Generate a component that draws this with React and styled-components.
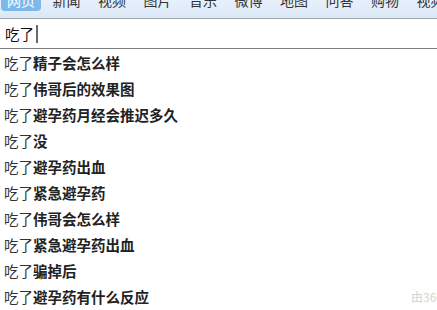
import React from "react";
import styled, { createGlobalStyle } from "styled-components";

const Global = createGlobalStyle`
  html, body { margin: 0; padding: 0; background: #fff; }
  body { font-family: "Noto Sans CJK SC", "Noto Sans", sans-serif; }
`;

const Page = styled.div`
  position: relative;
  width: 437px;
  height: 310px;
  overflow: hidden;
  background: #fff;
`;

const TabBar = styled.div`
  height: 19px;
  box-sizing: border-box;
  border-bottom: 1px solid #a2a9b1;
  background: linear-gradient(#e6f1fc, #dbe8f6);
  overflow: hidden;
`;

const Tabs = styled.div`
  display: flex;
  gap: 5.5px;
  margin-top: -8px;
  padding-left: 1px;
  white-space: nowrap;
`;

const Tab = styled.div`
  flex: none;
  padding: 0 6px 3px;
  font-size: 14px;
  line-height: 16px;
  color: ${(p) => (p.$active ? "#fff" : "#333")};
  background: ${(p) => (p.$active ? "#7db8ea" : "transparent")};
  border-radius: 0 0 4px 4px;
`;

const InputBox = styled.div`
  height: 30px;
  box-sizing: border-box;
  border-bottom: 1px solid #7c7c7c;
  display: flex;
  align-items: center;
  padding-left: 5px;
`;

const InputText = styled.span`
  font-size: 14.5px;
  color: #111;
  line-height: 18px;
`;

const Caret = styled.span`
  display: inline-block;
  width: 2px;
  height: 18px;
  margin-left: 2px;
  background: #6a6a6a;
`;

const List = styled.div`
  padding-top: 0;
`;

const Row = styled.div`
  height: 26px;
  display: flex;
  align-items: center;
  padding-left: 4px;
  font-size: 14.5px;
  color: #333;
  white-space: nowrap;
`;

const Bold = styled.b`
  font-weight: 700;
  color: #222;
`;

const Watermark = styled.div`
  position: absolute;
  left: 411px;
  top: 288px;
  font-size: 12px;
  color: #d4d4d4;
  white-space: nowrap;
`;

const tabs = ["网页", "新闻", "视频", "图片", "音乐", "微博", "地图", "问答", "购物", "视频"];
const items = [
  "精子会怎么样",
  "伟哥后的效果图",
  "避孕药月经会推迟多久",
  "没",
  "避孕药出血",
  "紧急避孕药",
  "伟哥会怎么样",
  "紧急避孕药出血",
  "骗掉后",
  "避孕药有什么反应",
];

export default function App() {
  return (
    <Page>
      <Global />
      <TabBar>
        <Tabs>
          {tabs.map((t, i) => (
            <Tab key={i} $active={i === 0}>{t}</Tab>
          ))}
        </Tabs>
      </TabBar>
      <InputBox>
        <InputText>吃了</InputText>
        <Caret />
      </InputBox>
      <List>
        {items.map((s, i) => (
          <Row key={i}>
            吃了<Bold>{s}</Bold>
          </Row>
        ))}
      </List>
      <Watermark>由360搜索提供</Watermark>
    </Page>
  );
}
